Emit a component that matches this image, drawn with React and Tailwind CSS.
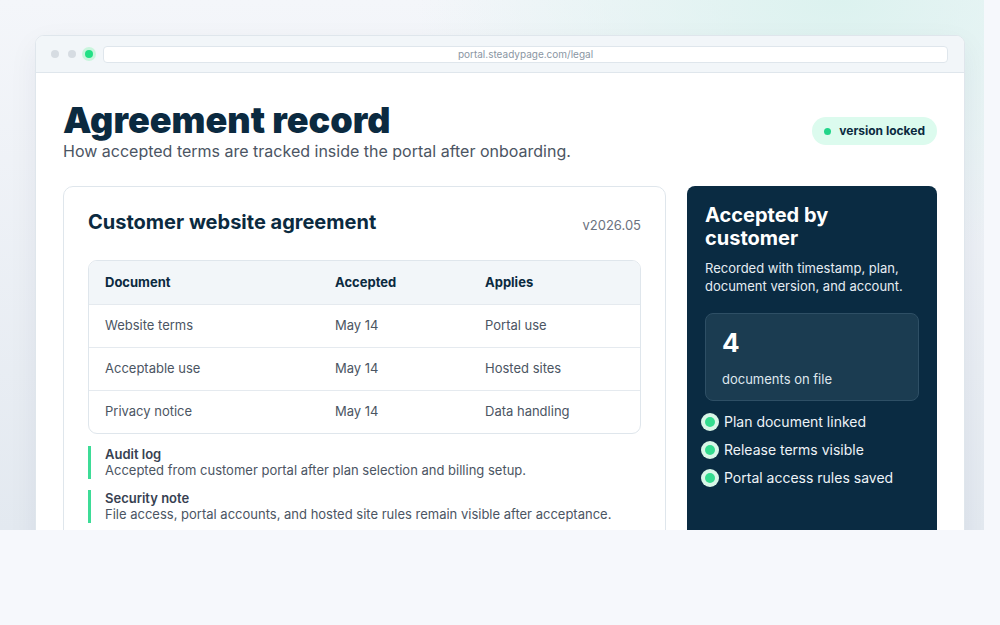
import React from "react";

const rows = [
  ["Website terms", "May 14", "Portal use"],
  ["Acceptable use", "May 14", "Hosted sites"],
  ["Privacy notice", "May 14", "Data handling"],
];

const checks = ["Plan document linked", "Release terms visible", "Portal access rules saved"];

export default function App() {
  return (
    <div className="w-[1000px] h-[625px] bg-[#f6f8fc] overflow-hidden" style={{ fontFamily: "Inter, 'Noto Sans', sans-serif" }}>
      <div className="w-[984px] h-[530px] overflow-hidden pt-[35px] px-[35px] bg-[radial-gradient(ellipse_420px_260px_at_85%_0%,#dcf2ef_0%,rgba(220,242,239,0)_100%),linear-gradient(180deg,#f4f6fa_0%,#e3e9f0_100%)]">
        <div className="w-[930px] h-[560px] bg-white rounded-t-[9px] border border-[#dfe6ec] shadow-[0_10px_30px_rgba(15,40,60,0.06)] overflow-hidden">
          {/* toolbar */}
          <div className="h-[37px] bg-[#f2f6f9] border-b border-[#dfe6ec] flex items-center pl-[15px] pr-[16px] gap-[9px]">
            <span className="w-[8px] h-[8px] rounded-full bg-[#d6dce2]" />
            <span className="w-[8px] h-[8px] rounded-full bg-[#d6dce2]" />
            <span className="w-[14px] h-[14px] rounded-full bg-[#c9f5dd] flex items-center justify-center -ml-[3px]">
              <span className="w-[8px] h-[8px] rounded-full bg-[#22e085]" />
            </span>
            <div className="flex-1 h-[17px] bg-white border border-[#dfe6ec] rounded-[4px] flex items-center justify-center text-[10px] text-[#8a96a3] -ml-[2px]">
              portal.steadypage.com/legal
            </div>
          </div>

          {/* content */}
          <div className="px-[27px] pt-[27px]">
            <div className="flex items-start justify-between">
              <div>
                <h1 className="text-[36px] leading-[40px] font-black text-[#0b2a40]">Agreement record</h1>
                <p className="text-[16px] leading-[20px] text-[#4b5563] mt-[1px]">How accepted terms are tracked inside the portal after onboarding.</p>
              </div>
              <div className="mt-[17px] h-[28px] px-[12px] rounded-full bg-[#dcfbee] flex items-center gap-[8px]">
                <span className="w-[7px] h-[7px] rounded-full bg-[#22d58a]" />
                <span className="text-[12px] font-bold text-[#0b2a40]">version locked</span>
              </div>
            </div>

            <div className="flex gap-[21px] mt-[25px]">
              {/* main card */}
              <div className="w-[603px] border border-[#dfe6ec] rounded-[10px] px-[24px] pt-[21px] pb-[20px]">
                <div className="flex items-center justify-between">
                  <h2 className="text-[20px] font-bold text-[#0b2a40] leading-[28px]">Customer website agreement</h2>
                  <span className="text-[13px] text-[#6b7280] mt-[8px]">v2026.05</span>
                </div>
                <div className="mt-[24px] border border-[#dfe6ec] rounded-[9px] overflow-hidden">
                  <div className="grid grid-cols-[230px_150px_1fr] bg-[#f2f6f9] h-[43px] items-center px-[16px] text-[13px] font-bold text-[#0b2a40]">
                    <span>Document</span>
                    <span>Accepted</span>
                    <span>Applies</span>
                  </div>
                  {rows.map((r) => (
                    <div key={r[0]} className="grid grid-cols-[230px_150px_1fr] h-[43px] items-center px-[16px] text-[13px] text-[#4b5563] border-t border-[#e5eaef]">
                      <span>{r[0]}</span>
                      <span>{r[1]}</span>
                      <span>{r[2]}</span>
                    </div>
                  ))}
                </div>
                <div className="mt-[12px] flex flex-col gap-[11px]">
                  <div className="border-l-[3px] border-[#3ddc97] pl-[14px]">
                    <div className="text-[13px] font-semibold text-[#374151] leading-[16px]">Audit log</div>
                    <div className="text-[13px] text-[#4b5563] leading-[17px]">Accepted from customer portal after plan selection and billing setup.</div>
                  </div>
                  <div className="border-l-[3px] border-[#3ddc97] pl-[14px]">
                    <div className="text-[13px] font-semibold text-[#374151] leading-[16px]">Security note</div>
                    <div className="text-[13px] text-[#4b5563] leading-[17px]">File access, portal accounts, and hosted site rules remain visible after acceptance.</div>
                  </div>
                </div>
              </div>

              {/* side panel */}
              <div className="w-[250px] h-[400px] bg-[#0a2b42] rounded-[8px] px-[18px] pt-[18px]">
                <h3 className="text-[20px] leading-[23px] font-bold text-white">Accepted by<br />customer</h3>
                <p className="mt-[9px] text-[13px] leading-[18px] text-[#e6edf3]">Recorded with timestamp, plan, document version, and account.</p>
                <div className="mt-[18px] h-[88px] rounded-[8px] bg-[#1b3c51] border border-[#2e4f65] px-[16px] pt-[14px]">
                  <div className="text-[26px] font-bold text-white leading-[30px]">4</div>
                  <div className="text-[13px] text-[#dfe7ee] mt-[12px]">documents on file</div>
                </div>
                <ul className="mt-[12px] flex flex-col gap-[10px] -ml-[4px]">
                  {checks.map((c) => (
                    <li key={c} className="flex items-center gap-[5px]">
                      <span className="w-[18px] h-[18px] rounded-full bg-[#d9f7e8] flex items-center justify-center">
                        <span className="w-[10px] h-[10px] rounded-full bg-[#34dc8f]" />
                      </span>
                      <span className="text-[14px] text-[#eef3f7] leading-[18px]">{c}</span>
                    </li>
                  ))}
                </ul>
              </div>
            </div>
          </div>
        </div>
      </div>
    </div>
  );
}
